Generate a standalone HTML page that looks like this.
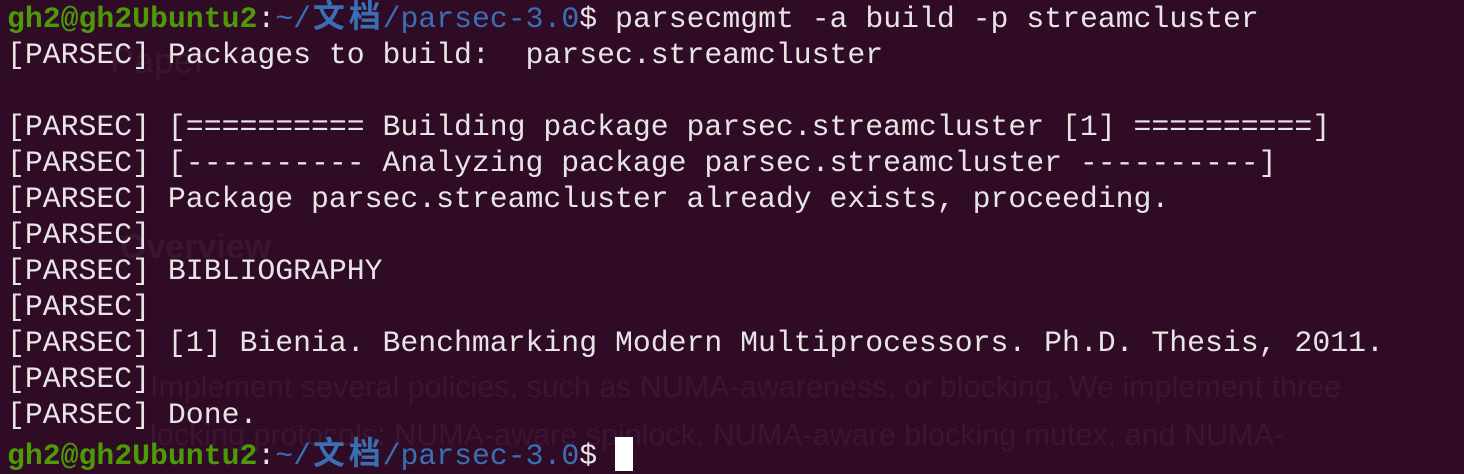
<!DOCTYPE html>
<html><head><meta charset="utf-8"><style>
html,body{margin:0;padding:0;}
body{width:1464px;height:472px;background:#2f0b26;overflow:hidden;position:relative;}
pre{margin:0;position:absolute;left:7px;top:-4px;font-family:"Liberation Mono","Noto Sans CJK SC",monospace;font-size:29.8px;line-height:36px;color:#e8e4e6;}
.g{color:#4e9a06;font-weight:bold}
.b{color:#3a6fb4}
.c{display:inline-block;width:35.8px;text-align:center;font-family:"Noto Sans CJK SC",sans-serif;font-size:32px;font-weight:bold}
.cur{display:inline-block;width:18px;height:34px;background:#fff;vertical-align:-7px}
.ghost{position:absolute;font-family:"Liberation Sans",sans-serif;font-size:30.5px;color:#3a1631;white-space:nowrap}
</style></head><body>
<div class="ghost" style="left:110px;top:40px;font-size:36px">Paper</div>
<div class="ghost" style="left:120px;top:228px;font-size:34px;font-weight:bold">Overview</div>
<div class="ghost" style="left:150px;top:370px">Implement several policies, such as NUMA-awareness, or blocking. We implement three</div>
<div class="ghost" style="left:150px;top:418px">locking protocols: NUMA-aware spinlock, NUMA-aware blocking mutex, and NUMA-</div>
<pre><span class="g">gh2@gh2Ubuntu2</span>:<span class="b">~/<span class="c">文</span><span class="c">档</span>/parsec-3.0</span>$ parsecmgmt -a build -p streamcluster
[PARSEC] Packages to build:  parsec.streamcluster

[PARSEC] [========== Building package parsec.streamcluster [1] ==========]
[PARSEC] [---------- Analyzing package parsec.streamcluster ----------]
[PARSEC] Package parsec.streamcluster already exists, proceeding.
[PARSEC]
[PARSEC] BIBLIOGRAPHY
[PARSEC]
[PARSEC] [1] Bienia. Benchmarking Modern Multiprocessors. Ph.D. Thesis, 2011.
[PARSEC]
[PARSEC] Done.
<span class="g">gh2@gh2Ubuntu2</span>:<span class="b">~/<span class="c">文</span><span class="c">档</span>/parsec-3.0</span>$ <span class="cur"></span></pre>
</body></html>
